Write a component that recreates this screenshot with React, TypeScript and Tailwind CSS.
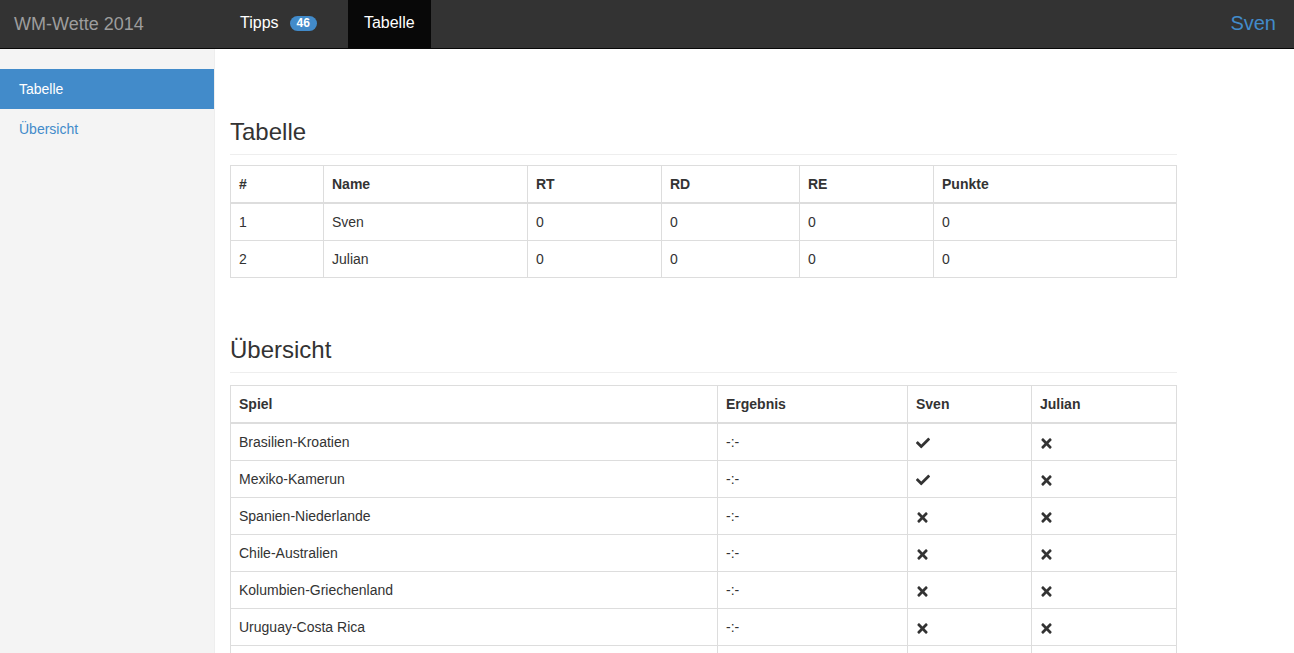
import React from 'react';
import { FaCheck, FaTimes } from 'react-icons/fa';

const STANDINGS = [
    { rank: 1, name: 'Sven', rt: 0, rd: 0, re: 0, punkte: 0 },
    { rank: 2, name: 'Julian', rt: 0, rd: 0, re: 0, punkte: 0 },
];

const GAMES: { spiel: string; sven: boolean; julian: boolean }[] = [
    { spiel: 'Brasilien-Kroatien', sven: true, julian: false },
    { spiel: 'Mexiko-Kamerun', sven: true, julian: false },
    { spiel: 'Spanien-Niederlande', sven: false, julian: false },
    { spiel: 'Chile-Australien', sven: false, julian: false },
    { spiel: 'Kolumbien-Griechenland', sven: false, julian: false },
    { spiel: 'Uruguay-Costa Rica', sven: false, julian: false },
    { spiel: 'England-Italien', sven: false, julian: false },
];

const th = 'border border-[#ddd] border-b-2 px-2 py-2 text-left font-bold leading-5';
const td = 'border border-[#ddd] px-2 py-2 leading-5';

const Tipp = ({ ok }: { ok: boolean }) =>
    ok ? <FaCheck className="inline-block w-[14px] h-[14px] text-[#333]" /> : <FaTimes className="inline-block w-[13px] h-[15px] text-[#333]" />;

export default function App() {
    return (
        <div className="min-h-screen flex flex-col text-[14px] text-[#333] font-['Liberation_Sans',Arial,sans-serif]">
            {/* top navbar */}
            <div className="h-[49px] bg-[#333] border-b border-[#080808] flex items-stretch shrink-0">
                <div className="pl-[14px] w-[225px] flex items-center text-[18px] text-[#9d9d9d]">WM-Wette 2014</div>
                <div className="flex items-center px-[15px] pb-[2px] text-[16px] text-white">
                    Tipps
                    <span className="ml-[11px] bg-[#428bca] text-white text-[12px] font-bold leading-[15px] px-[7px] rounded-[10px]">46</span>
                </div>
                <div className="ml-[16px] flex items-center px-4 pb-[2px] bg-[#080808] text-[16px] text-white">Tabelle</div>
                <div className="ml-auto pr-[18px] pb-[2px] flex items-center text-[20px] text-[#428bca]">Sven</div>
            </div>

            <div className="flex flex-1">
                {/* sidebar */}
                <div className="w-[215px] shrink-0 bg-[#f4f4f4] border-r border-[#eee] pt-5">
                    <div className="h-10 px-[19px] flex items-center bg-[#428bca] text-white">Tabelle</div>
                    <div className="h-10 px-[19px] flex items-center text-[#428bca]">Übersicht</div>
                </div>

                {/* main content */}
                <div className="pl-[15px] pt-[70px] w-[962px]">
                    <h2 className="text-[24px] leading-[26px] pb-[9px] border-b border-[#eee]">Tabelle</h2>
                    <table className="mt-[10px] w-[946px] table-fixed border-collapse">
                        <colgroup>
                            <col className="w-[93px]" />
                            <col className="w-[204px]" />
                            <col className="w-[134px]" />
                            <col className="w-[138px]" />
                            <col className="w-[134px]" />
                            <col className="w-[243px]" />
                        </colgroup>
                        <thead>
                            <tr>
                                <th className={th}>#</th>
                                <th className={th}>Name</th>
                                <th className={th}>RT</th>
                                <th className={th}>RD</th>
                                <th className={th}>RE</th>
                                <th className={th}>Punkte</th>
                            </tr>
                        </thead>
                        <tbody>
                            {STANDINGS.map(s => (
                                <tr key={s.rank}>
                                    <td className={td}>{s.rank}</td>
                                    <td className={td}>{s.name}</td>
                                    <td className={td}>{s.rt}</td>
                                    <td className={td}>{s.rd}</td>
                                    <td className={td}>{s.re}</td>
                                    <td className={td}>{s.punkte}</td>
                                </tr>
                            ))}
                        </tbody>
                    </table>

                    <h2 className="mt-[59px] text-[24px] leading-[26px] pb-[9px] border-b border-[#eee]">Übersicht</h2>
                    <table className="mt-[12px] w-[946px] table-fixed border-collapse">
                        <colgroup>
                            <col className="w-[487px]" />
                            <col className="w-[190px]" />
                            <col className="w-[124px]" />
                            <col className="w-[145px]" />
                        </colgroup>
                        <thead>
                            <tr>
                                <th className={th}>Spiel</th>
                                <th className={th}>Ergebnis</th>
                                <th className={th}>Sven</th>
                                <th className={th}>Julian</th>
                            </tr>
                        </thead>
                        <tbody>
                            {GAMES.map(g => (
                                <tr key={g.spiel}>
                                    <td className={td}>{g.spiel}</td>
                                    <td className={td}>-:-</td>
                                    <td className={td}><Tipp ok={g.sven} /></td>
                                    <td className={td}><Tipp ok={g.julian} /></td>
                                </tr>
                            ))}
                        </tbody>
                    </table>
                </div>
            </div>
        </div>
    );
}
